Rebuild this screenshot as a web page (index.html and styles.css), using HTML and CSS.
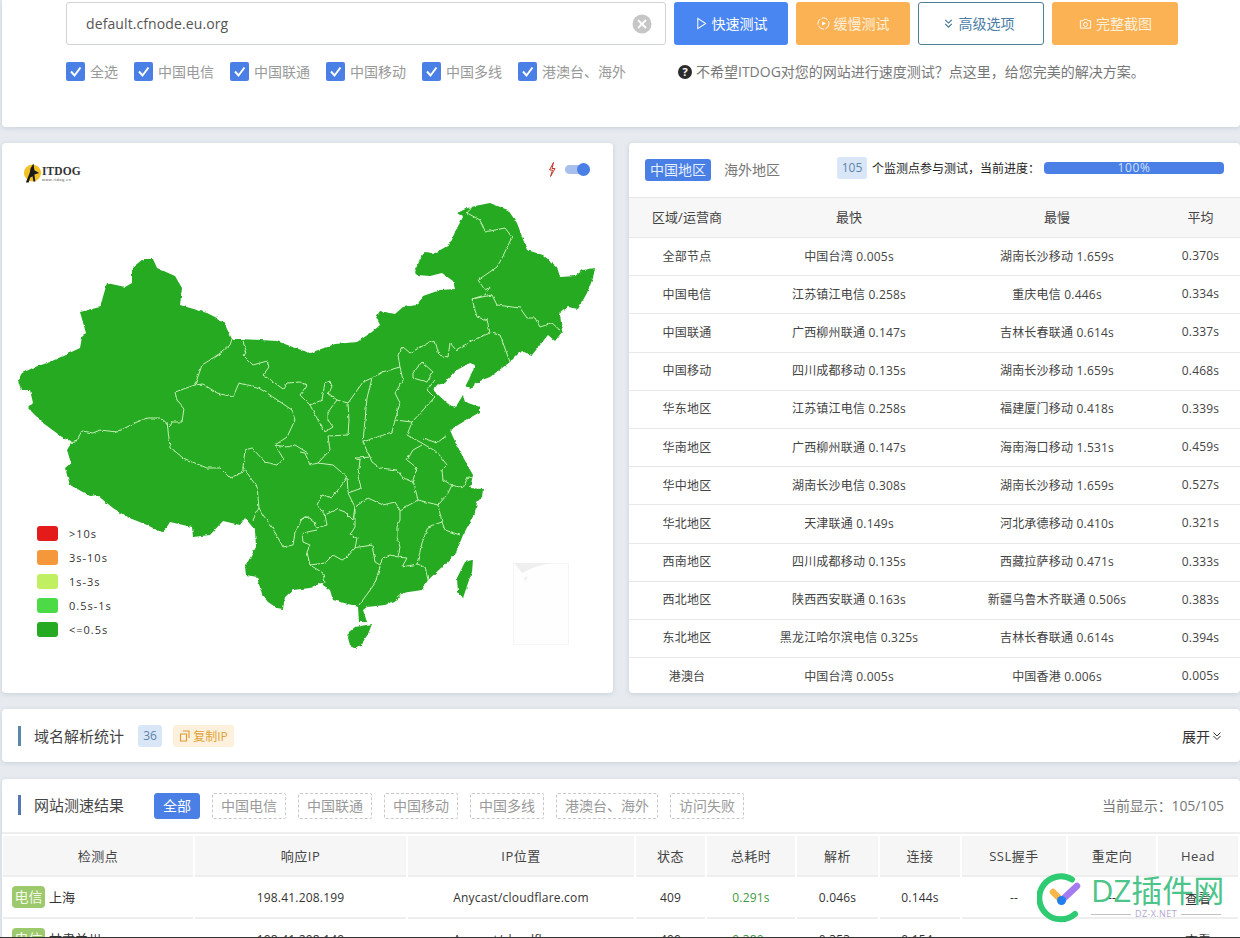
FILE: index.html
```html
<!DOCTYPE html>
<html lang="zh-CN">
<head>
<meta charset="utf-8">
<title>ITDOG 网站测速</title>
<link rel="stylesheet" href="styles.css">
</head>
<body>
<main class="page">
  <section class="card top-card">
    <div class="search-row">
      <div class="search-box">
        <span class="search-text">default.cfnode.eu.org</span>
        <svg class="clear-icon" viewBox="0 0 20 20"><circle cx="10" cy="10" r="9.5" fill="#c6c6c6"/><path d="M6 6l8 8M14 6l-8 8" stroke="#fff" stroke-width="1.8" fill="none"/></svg>
      </div>
      <button class="btn btn-blue"><svg class="btn-icon" viewBox="0 0 14 14"><path d="M3 1.500l8.500 5.500L3 12.500z" fill="none" stroke="#fff" stroke-width="1.100"/></svg><span class="btn-label">快速测试</span></button>
      <button class="btn btn-orange btn-slow"><svg class="btn-icon" viewBox="0 0 14 14"><circle cx="7" cy="7" r="6" fill="none" stroke="#fff" stroke-width="1" stroke-dasharray="7 1.500"/><path d="M5.500 4.500l4 2.500-4 2.500z" fill="#fff"/></svg><span class="btn-label">缓慢测试</span></button>
      <button class="btn btn-outline"><svg class="btn-icon" viewBox="0 0 14 14"><path d="M3.500 3l3.500 3.500L10.500 3M3.500 7.500L7 11l3.500-3.500" fill="none" stroke="#3f7396" stroke-width="1.200"/></svg><span class="btn-label">高级选项</span></button>
      <button class="btn btn-orange btn-shot"><svg class="btn-icon" viewBox="0 0 14 14"><path d="M1.500 4h3l1-1.500h3L9.500 4h3v8h-11z" fill="none" stroke="#fff" stroke-width="1"/><circle cx="7" cy="8" r="2.200" fill="none" stroke="#fff"/></svg><span class="btn-label">完整截图</span></button>
    </div>
    <div class="check-row">
      <div class="checks">
        <label class="check check-all"><span class="box"><svg viewBox="0 0 19 19"><path d="M5 9.500l3.500 4L14.500 5.500" fill="none" stroke="#fff" stroke-width="2"/></svg></span><span class="check-label">全选</span></label>
        <label class="check"><span class="box"><svg viewBox="0 0 19 19"><path d="M5 9.500l3.500 4L14.500 5.500" fill="none" stroke="#fff" stroke-width="2"/></svg></span><span class="check-label">中国电信</span></label>
        <label class="check"><span class="box"><svg viewBox="0 0 19 19"><path d="M5 9.500l3.500 4L14.500 5.500" fill="none" stroke="#fff" stroke-width="2"/></svg></span><span class="check-label">中国联通</span></label>
        <label class="check"><span class="box"><svg viewBox="0 0 19 19"><path d="M5 9.500l3.500 4L14.500 5.500" fill="none" stroke="#fff" stroke-width="2"/></svg></span><span class="check-label">中国移动</span></label>
        <label class="check"><span class="box"><svg viewBox="0 0 19 19"><path d="M5 9.500l3.500 4L14.500 5.500" fill="none" stroke="#fff" stroke-width="2"/></svg></span><span class="check-label">中国多线</span></label>
        <label class="check"><span class="box"><svg viewBox="0 0 19 19"><path d="M5 9.500l3.500 4L14.500 5.500" fill="none" stroke="#fff" stroke-width="2"/></svg></span><span class="check-label">港澳台、海外</span></label>
      </div>
      <div class="notice"><span class="q-icon">?</span><span class="notice-text">不希望ITDOG对您的网站进行速度测试？点这里，给您完美的解决方案。</span></div>
    </div>
  </section>

  <div class="stats-row">
    <section class="card map-card">
      <svg class="map" viewBox="2 143 611 550">
        <defs>
          <filter id="rough" x="0" y="140" width="620" height="560" filterUnits="userSpaceOnUse" primitiveUnits="userSpaceOnUse">
            <feTurbulence type="fractalNoise" baseFrequency="0.22" numOctaves="2" seed="4"/>
            <feDisplacementMap in="SourceGraphic" scale="3" xChannelSelector="R" yChannelSelector="G"/>
          </filter>
        </defs>
        <g class="rough-map">
        <path class="land" d="M143 259L153 259L157 268L175 276L182 288L180 305L207 313L223 321L232 339L242 339L277 341L290 346L310 353L335 344L357 342L372 332L380 325L376 317L380 311L395 314L403 307L417 305L423 296L440 290L455 289L453 281L442 273L430 276L417 275L414 272L424 252L435 253L449 245L457 228L463 217L457 213L470 207L490 203L508 210L517 223L527 250L543 255L557 267L560 277L575 276L583 270L595 268L593 278L587 293L578 309L568 307L560 313L562 332L555 341L548 335L532 355L521 351L510 362L490 377L480 381L470 389L465 387L470 377L475 365L470 363L457 370L445 383L437 385L433 390L447 403L455 408L463 395L465 402L480 407L480 412L463 422L450 430L453 437L463 457L473 475L470 488L483 489L482 497L477 502L475 513L463 535L455 555L428 580L422 590L402 593L397 600L385 605L367 607L363 610L367 622L359 622L358 607L352 605L333 600L330 590L320 583L310 588L293 590L285 597L283 609L277 608L268 602L262 595L257 577L246 575L245 567L256 547L255 530L245 518L240 525L223 521L210 535L193 537L192 527L170 522L163 533L147 525L127 517L113 508L97 495L90 496L70 485L65 468L71 463L67 450L72 442L62 437L43 423L28 408L33 403L30 390L21 390L18 380L22 373L35 367L50 362L80 348L82 337L86 333L80 312L100 307L107 283L125 287L132 283L132 268Z"/>
        <path class="land" d="M349 632L355 627L372 624L368 634L361 645L356 648L350 645L348 638Z"/>
        <path class="land" d="M465 562L473 560L472 572L468 583L463 598L458 592L457 578Z"/>
        <path class="border" d="M232 339L230 345L222 352L210 360L202 365L195 385L175 392L177 400L184 408L182 422L172 422L170 427L160 418L147 418L137 422L127 427L117 432L100 430L93 433L82 431L75 443L68 444"/>
        <path class="border" d="M167 422L170 447L183 458L207 468L220 468L230 478L243 472L243 467L245 450L252 448L265 462L277 465L283 458L275 445L287 447L295 445L308 453"/>
        <path class="border" d="M243 467L257 487L259 508L253 520M259 508L263 515L272 527L283 547L293 545L295 533L303 517L310 517"/>
        <path class="border" d="M195 385L203 384L217 393L233 397L239 383L257 387L270 395L292 410L295 420L287 437L275 445"/>
        <path class="border" d="M242 339L247 353L243 355L253 365L267 361L269 367L263 375L275 383L283 389L287 383L300 382L307 385L300 395L310 405L322 400L325 383L330 381L332 387L328 393L337 400L348 403L363 382L372 378L382 372L400 367L398 355L403 347L410 353L428 343L435 341L439 355L448 357L450 343L456 350L473 340L490 333"/>
        <path class="border" d="M310 405L318 420L325 432L333 427L328 420L328 412L337 400M348 403L349 420L348 435L328 436L330 450L318 463L310 465L305 453L300 452"/>
        <path class="border" d="M372 378L367 398L365 420L363 442L372 462L380 468L397 470L403 478L413 482M400 367L403 380L395 393L400 403L395 420L392 432L363 442"/>
        <path class="border" d="M395 420L412 422L407 435L420 442L437 452L447 465L442 470L443 480L452 485L463 488L468 477L473 478M412 422L435 397M423 438L437 443L447 435"/>
        <path class="border" d="M413 373L422 362L433 372L427 382L413 378ZM435 380L427 390L433 396"/>
        <path class="border" d="M490 333L500 335L510 362M472 299L492 295L497 305L520 308L527 318L535 318L540 327L552 323L562 332M472 299L477 317L487 320L490 333"/>
        <path class="border" d="M472 207L467 213L480 220L485 232L505 228L512 237L502 258L497 267L478 280L485 290L490 287L485 295L472 299"/>
        <path class="border" d="M422 445L413 450L407 460L417 468L413 480L418 500L438 505L447 495L452 485M438 505L442 522L445 530L460 535M442 522L428 527L422 543L417 564L402 567L407 558L398 557L400 547L397 537L397 527L400 520L400 510L418 500M417 564L425 567L428 580"/>
        <path class="border" d="M400 510L395 502L383 505L368 498L355 507L348 493L362 488L358 477L360 460L355 458L372 457M348 492L347 477L333 465L318 463"/>
        <path class="border" d="M347 478L338 490L332 498L322 495L317 505L325 515L337 509L345 512L353 520L355 507L355 527L350 535L357 538L355 548L360 547L372 545L375 562L380 565L383 558L390 555L398 557M380 567L375 583L368 593L359 605"/>
        <path class="border" d="M325 515L327 525L317 528L315 523L307 517L300 520M317 530L302 533L303 542L310 545L307 552L310 565L323 573L325 583M355 548L347 557L342 560L333 555L325 563L310 565M397 597L402 593"/>
        </g>
        <g class="inset">
          <rect x="513.500" y="563.500" width="55" height="81"/>
          <path class="inset-land" d="M514 563L550 563L535 567L522 573Z"/>
          <path class="inset-land" d="M524 578L528 576L525 582Z"/>
        </g>
      </svg>
      <div class="map-head">
        <div class="logo">
          <svg class="logo-mark" viewBox="0 0 20 20"><circle cx="10" cy="10" r="9" fill="#f2c125"/><path d="M3 20L7 10L8 5L11 0L12 7L17 10L12 11.500L13 19L11 19L10 13.500L7.500 15L6 20Z" fill="#1a1a1a"/></svg>
          <div class="logo-words"><span class="logo-name">ITDOG</span><span class="logo-url">www.itdog.cn</span></div>
        </div>
        <div class="toggle-wrap">
          <svg class="bolt" viewBox="0 0 8 15"><path d="M5.500 0.500L1.500 8h3L2.500 14.500L7 6.500H4z" fill="none" stroke="#c0392b" stroke-width="1"/></svg>
          <span class="toggle"><span class="knob"></span></span>
        </div>
      </div>
      <ul class="legend">
        <li><span class="swatch sw-red"></span>&gt;10s</li>
        <li><span class="swatch sw-orange"></span>3s-10s</li>
        <li><span class="swatch sw-lime"></span>1s-3s</li>
        <li><span class="swatch sw-light"></span>0.5s-1s</li>
        <li><span class="swatch sw-green"></span>&lt;=0.5s</li>
      </ul>
    </section>

    <section class="card summary-card">
      <div class="summary-head">
        <span class="tab tab-on">中国地区</span>
        <span class="tab">海外地区</span>
        <span class="count-badge">105</span>
        <span class="progress-label">个监测点参与测试，当前进度：</span>
        <div class="progress">100%</div>
      </div>
      <table class="summary">
        <colgroup><col class="s1"><col class="s2"><col class="s3"><col class="s4"></colgroup>
        <thead><tr><th>区域/运营商</th><th>最快</th><th>最慢</th><th>平均</th></tr></thead>
        <tbody>
          <tr><td>全部节点</td><td>中国台湾 0.005s</td><td>湖南长沙移动 1.659s</td><td>0.370s</td></tr>
          <tr><td>中国电信</td><td>江苏镇江电信 0.258s</td><td>重庆电信 0.446s</td><td>0.334s</td></tr>
          <tr><td>中国联通</td><td>广西柳州联通 0.147s</td><td>吉林长春联通 0.614s</td><td>0.337s</td></tr>
          <tr><td>中国移动</td><td>四川成都移动 0.135s</td><td>湖南长沙移动 1.659s</td><td>0.468s</td></tr>
          <tr><td>华东地区</td><td>江苏镇江电信 0.258s</td><td>福建厦门移动 0.418s</td><td>0.339s</td></tr>
          <tr><td>华南地区</td><td>广西柳州联通 0.147s</td><td>海南海口移动 1.531s</td><td>0.459s</td></tr>
          <tr><td>华中地区</td><td>湖南长沙电信 0.308s</td><td>湖南长沙移动 1.659s</td><td>0.527s</td></tr>
          <tr><td>华北地区</td><td>天津联通 0.149s</td><td>河北承德移动 0.410s</td><td>0.321s</td></tr>
          <tr><td>西南地区</td><td>四川成都移动 0.135s</td><td>西藏拉萨移动 0.471s</td><td>0.333s</td></tr>
          <tr><td>西北地区</td><td>陕西西安联通 0.163s</td><td>新疆乌鲁木齐联通 0.506s</td><td>0.383s</td></tr>
          <tr><td>东北地区</td><td>黑龙江哈尔滨电信 0.325s</td><td>吉林长春联通 0.614s</td><td>0.394s</td></tr>
          <tr><td>港澳台</td><td>中国台湾 0.005s</td><td>中国香港 0.006s</td><td>0.005s</td></tr>
        </tbody>
      </table>
    </section>
  </div>

  <section class="card dns-card">
    <h2 class="section-title title-dns">域名解析统计</h2>
    <span class="count-badge count-dns">36</span>
    <span class="copy-ip"><svg viewBox="0 0 12 12"><path d="M4 1h6v7M1.500 4h6v7h-6z" fill="none" stroke="#dd9a33" stroke-width="1.100"/></svg>复制IP</span>
    <span class="expand">展开<svg viewBox="0 0 10 10"><path d="M1.500 1.500L5 5l3.500-3.500M1.500 5L5 8.500 8.500 5" fill="none" stroke="#333" stroke-width="1"/></svg></span>
  </section>

  <section class="card result-card">
    <div class="result-head">
      <h2 class="section-title title-result">网站测速结果</h2>
      <div class="filters">
        <span class="filter filter-on">全部</span>
        <span class="filter">中国电信</span>
        <span class="filter">中国联通</span>
        <span class="filter">中国移动</span>
        <span class="filter">中国多线</span>
        <span class="filter">港澳台、海外</span>
        <span class="filter">访问失败</span>
      </div>
      <span class="shown">当前显示：105/105</span>
    </div>
    <table class="results">
      <colgroup><col class="r1"><col class="r2"><col class="r3"><col class="r4"><col class="r5"><col class="r6"><col class="r7"><col class="r8"><col class="r9"><col class="r10"></colgroup>
      <thead><tr><th>检测点</th><th>响应IP</th><th>IP位置</th><th>状态</th><th>总耗时</th><th>解析</th><th>连接</th><th>SSL握手</th><th>重定向</th><th>Head</th></tr></thead>
      <tbody>
        <tr><td class="node"><span class="isp">电信</span>上海</td><td>198.41.208.199</td><td>Anycast/cloudflare.com</td><td>409</td><td class="ok">0.291s</td><td>0.046s</td><td>0.144s</td><td>--</td><td>--</td><td class="view">查看</td></tr>
        <tr><td class="node"><span class="isp">电信</span>甘肃兰州</td><td>198.41.208.140</td><td>Anycast/cloudflare.com</td><td>409</td><td class="ok">0.380s</td><td>0.353s</td><td>0.154s</td><td>--</td><td>--</td><td class="view">查看</td></tr>
      </tbody>
    </table>
  </section>
</main>

<div class="watermark">
  <svg class="wm-logo" viewBox="0 0 50 50">
    <path d="M35 6.500A21.500 21.500 0 1 0 38 41" fill="none" stroke="#2fcb72" stroke-width="6" stroke-linecap="round"/>
    <path d="M16 19L24 27" stroke="#fbb64a" stroke-width="6.500" stroke-linecap="round"/>
    <path d="M25 27L40 13" stroke="#a47cf0" stroke-width="6.500" stroke-linecap="round"/>
    <circle cx="24.500" cy="27.500" r="4.500" fill="#1f7ff0"/>
  </svg>
  <div class="wm-text">
    <span class="wm-name">DZ插件网</span>
    <span class="wm-url">DZ-X.NET</span>
  </div>
</div>
<div class="window-edge"></div>
</body>
</html>
```
FILE: styles.css
```css
* { box-sizing: border-box; }
html, body { margin: 0; padding: 0; height: 938px; overflow: hidden; }
body {
  background: #e7ebf0;
  color: #333;
  font-family: "Open Sans", "Noto Sans CJK SC", sans-serif;
  font-size: 14px;
  position: relative;
}
.page { padding-left: 2px; width: 1240px; }
.card {
  background: #fff;
  border-radius: 4px;
  box-shadow: 0 1px 5px rgba(120, 135, 155, .28);
}

/* top search */
.top-card { height: 127px; padding: 2px 0 0 64px; border-radius: 0 0 4px 4px; }
.search-row { display: flex; height: 43px; }
.search-box {
  width: 600px;
  border: 1px solid #cfd3d8;
  border-radius: 3px;
  display: flex;
  align-items: center;
  justify-content: space-between;
  padding: 0 13px 0 19px;
  margin-right: 8px;
}
.search-text { font-size: 14px; letter-spacing: .1px; color: #555; }
.clear-icon { width: 20px; height: 20px; }
.btn {
  height: 43px;
  border: 0;
  border-radius: 3px;
  font: inherit;
  color: #fff;
  display: flex;
  align-items: center;
  justify-content: center;
  padding: 0;
}
.btn-label { position: relative; top: -1px; }
.btn-icon { width: 13px; height: 13px; margin-right: 4px; }
.btn-blue { width: 114px; background: #4a86f2; margin-right: 8px; }
.btn-orange { background: #fbb255; color: #fdf0da; }
.btn-slow { width: 114px; margin-right: 8px; }
.btn-outline { width: 126px; background: #fff; border: 1px solid #4d7f95; color: #4a7da5; margin-right: 8px; padding-right: 6px; }
.btn-shot { width: 126px; padding-left: 1px; }

.check-row { display: flex; margin-top: 17px; height: 19px; align-items: center; }
.checks { display: flex; width: 612px; }
.check { display: flex; align-items: center; color: #999; width: 96px; white-space: nowrap; }
.check-all { width: 68px; }
.check-label, .notice-text { position: relative; top: -1px; }
.box { width: 19px; height: 19px; background: #4a80e6; border-radius: 2px; margin-right: 5px; display: block; }
.box svg { display: block; width: 19px; height: 19px; }
.notice { display: flex; align-items: center; color: #777; white-space: nowrap; }
.q-icon {
  width: 14px; height: 14px; border-radius: 50%;
  background: #2b2b2b; color: #fff;
  font-size: 11px; font-weight: 700; line-height: 14px; text-align: center;
  margin-right: 4px;
}

/* row */
.stats-row { display: grid; grid-template-columns: 611px 611px; gap: 16px; margin-top: 16px; height: 550px; }
.map-card { position: relative; overflow: hidden; }
.map { display: block; width: 611px; height: 550px; }
.rough-map { filter: url(#rough); }
.land { fill: #26aa24; }
.border { fill: none; stroke: #d6f7c6; stroke-width: .9; stroke-linejoin: round; }
.inset rect { fill: #fefefe; stroke: #f5f5f5; }
.inset-land { fill: #efefef; }
.map-head {
  position: absolute; left: 21px; right: 23px; top: 20px;
  display: flex; justify-content: space-between; align-items: flex-start;
}
.logo { display: flex; align-items: center; }
.logo-mark { width: 19px; height: 20px; display: block; }
.logo-words { display: flex; flex-direction: column; margin: 1px 0 0 0; }
.logo-name { font-family: "Liberation Serif", serif; font-weight: 700; font-size: 11.500px; line-height: 11px; letter-spacing: .1px; color: #333; }
.logo-url { font-family: "Liberation Sans", sans-serif; font-size: 4px; line-height: 5px; letter-spacing: .5px; color: #555; }
.toggle-wrap { display: flex; align-items: center; margin-top: -1px; }
.bolt { width: 8px; height: 15px; margin-right: 9px; }
.toggle { width: 25px; height: 9px; border-radius: 5px; background: #a8bfee; position: relative; display: block; }
.knob { position: absolute; right: 0; top: -2px; width: 13px; height: 13px; border-radius: 50%; background: #4a80e6; }
.legend {
  position: absolute; left: 35px; top: 378px;
  margin: 0; padding: 0; list-style: none;
  font-size: 11px; letter-spacing: 1px; color: #333;
}
.legend li { display: flex; align-items: center; height: 24px; }
.swatch { width: 21px; height: 15px; border-radius: 3px; margin-right: 11px; display: block; }
.sw-red { background: #e31b1b; }
.sw-orange { background: #f5973b; }
.sw-lime { background: #c0f061; }
.sw-light { background: #4cdb47; }
.sw-green { background: #26aa24; }

/* summary */
.summary-card { overflow: hidden; }
.summary-head { display: flex; align-items: center; height: 54px; padding: 0 16px; }
.tab { width: 66px; height: 22px; line-height: 22px; text-align: center; color: #777; border-radius: 3px; margin-right: 13px; }
.tab + .tab { width: 56px; margin-right: 57px; }
.tab-on { background: #4a80e6; color: #e6eefc; }
.count-badge {
  height: 22px; line-height: 22px; width: 30px; text-align: center;
  background: #d9e6f7; color: #5d84ab; border-radius: 3px; font-size: 12px;
  margin-top: -5px;
}
.progress-label { font-size: 12px; margin-left: 5px; width: 172px; margin-top: -4px; color: #222; white-space: nowrap; }
.progress {
  width: 180px; height: 12px; line-height: 12px; text-align: center;
  background: #4a80e6; color: #cfe0fb; border-radius: 4px; font-size: 12px; letter-spacing: .6px;
  margin-top: -4px;
}
table { border-collapse: collapse; table-layout: fixed; }
.summary { width: 611px; font-size: 12px; text-align: center; letter-spacing: .2px; }
.s1 { width: 116px; } .s2 { width: 208px; } .s3 { width: 208px; } .s4 { width: 79px; }
.summary th { height: 40px; background: #f7f7f7; font-weight: 400; font-size: 13px; letter-spacing: 0; border-top: 1px solid #e8e8e8; border-bottom: 1px solid #e8e8e8; color: #444; padding: 0 0 2px; }
.summary td { height: 38.200px; border-bottom: 1px solid #e8e8e8; padding: 0 0 2px; color: #444; }

/* dns */
.dns-card { margin-top: 16px; height: 53px; display: flex; align-items: center; padding: 0 18px 0 16px; }
.section-title {
  margin: 0; font-weight: 400; font-size: 15px; color: #444; width: 107px;
  border-left: 3px solid #5a88ac; padding-left: 13px; line-height: 20px; white-space: nowrap;
}
.count-dns { width: 24px; margin: 0 11px 0 13px; }
.copy-ip {
  height: 22px; width: 61px; display: flex; align-items: center; justify-content: center;
  background: #fdf1dd; color: #e0a236; font-size: 12px; border-radius: 3px;
}
.copy-ip svg { width: 12px; height: 12px; margin-right: 2px; }
.expand { margin-left: auto; display: flex; align-items: center; color: #333; }
.expand svg { width: 10px; height: 10px; margin-left: 2px; }

/* results */
.result-card { margin-top: 17px; height: 200px; overflow: hidden; }
.result-head { display: flex; padding: 14px 16px 0 16px; height: 53px; align-items: flex-start; }
.title-result { margin-top: 2px; border-left-color: #5577b5; }
.filters { display: flex; gap: 12px; margin-left: 29px; }
.filter {
  height: 26px; line-height: 24px; padding: 0 8px; white-space: nowrap;
  border: 1px dashed #c9c9c9; border-radius: 2px; color: #9a9a9a;
}
.filter-on { background: #4a80e6; border: 1px solid #4a80e6; color: #fff; width: 46px; text-align: center; border-radius: 3px; }
.shown { margin-left: auto; color: #777; margin-top: 2px; white-space: nowrap; letter-spacing: -.1px; }
.results { width: 1239px; margin-left: -1px; border-collapse: separate; border-spacing: 2px 0; font-size: 12px; letter-spacing: .2px; text-align: center; border-top: 2px solid #eee; }
.r1 { width: 190px; } .r2 { width: 211px; } .r3 { width: 226px; } .r4 { width: 69px; } .r5 { width: 88px; }
.r6 { width: 81px; } .r7 { width: 80px; } .r8 { width: 104px; } .r9 { width: 88px; } .r10 { width: 80px; }
.results th { height: 43px; background: #f6f6f6; font-weight: 400; font-size: 13px; letter-spacing: .5px; color: #444; border-top: 2px solid #fff; padding: 0; border-bottom: 2px solid #eee; }
.results td { height: 42px; padding: 0; border-bottom: 2px solid #eee; color: #333; }
.results .node { text-align: left; padding-left: 9px; font-size: 13px; letter-spacing: 0; }
.results .view { font-size: 13px; letter-spacing: 0; }
.isp { display: inline-block; width: 33px; height: 22px; line-height: 22px; font-size: 14px; text-align: center; background: #9dc96d; color: #f3f9e8; border-radius: 4px; margin-right: 4px; }
.results .ok { color: #3f9a3d; }

/* watermark */
.watermark { position: absolute; left: 1037px; top: 873px; display: flex; pointer-events: none; }
.wm-logo { width: 50px; height: 50px; display: block; }
.wm-text { margin-left: 4px; display: flex; flex-direction: column; width: 130px; }
.wm-name { color: #4cc48a; font-size: 31px; line-height: 34px; white-space: nowrap; font-weight: 400; }
.wm-url { display: flex; align-items: center; gap: 4px; color: #b0a6ca; font-size: 9px; line-height: 10px; margin-top: 2px; white-space: nowrap; letter-spacing: .4px; }
.wm-url::before, .wm-url::after { content: ""; flex: 1; height: 1px; background: #c3c3c3; }
.window-edge { position: absolute; left: 0; right: 0; top: 937px; height: 1px; background: #333; }
```
